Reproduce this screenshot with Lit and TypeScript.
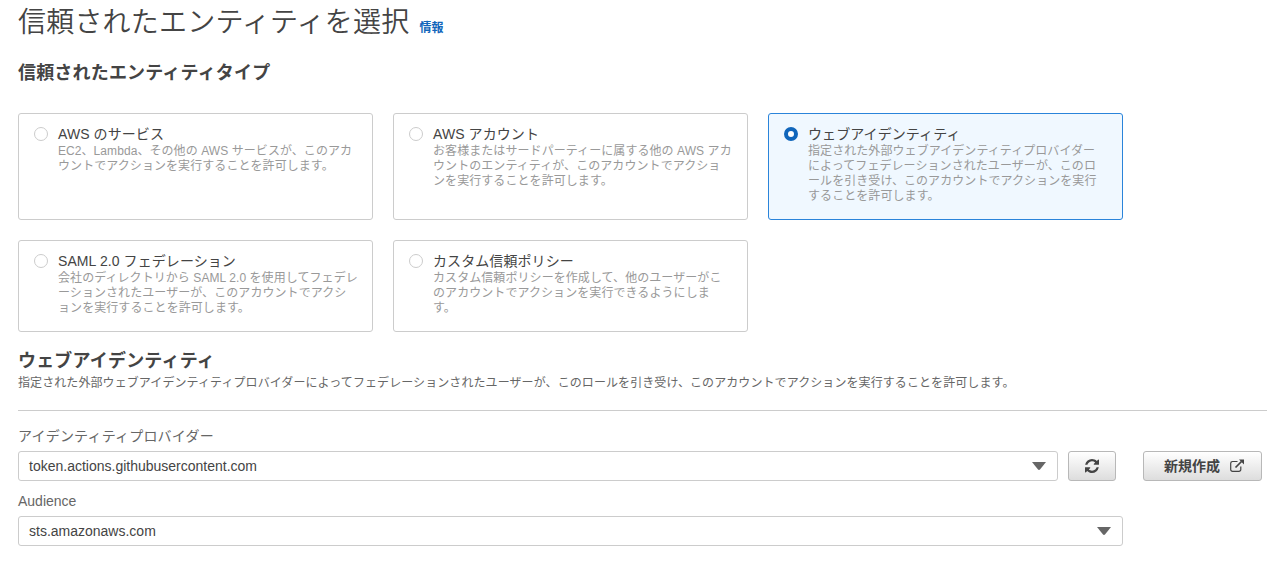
import { LitElement, html, css } from "lit";
import { customElement, property } from "lit/decorators.js";
import { classMap } from "lit/directives/class-map.js";

interface EntityType {
  label: string;
  lines: string[];
  selected?: boolean;
}

const ENTITY_TYPES: EntityType[] = [
  {
    label: "AWS のサービス",
    lines: ["EC2、Lambda、その他の AWS サービスが、このアカ", "ウントでアクションを実行することを許可します。"],
  },
  {
    label: "AWS アカウント",
    lines: [
      "お客様またはサードパーティーに属する他の AWS アカ",
      "ウントのエンティティが、このアカウントでアクショ",
      "ンを実行することを許可します。",
    ],
  },
  {
    label: "ウェブアイデンティティ",
    lines: [
      "指定された外部ウェブアイデンティティプロバイダー",
      "によってフェデレーションされたユーザーが、このロ",
      "ールを引き受け、このアカウントでアクションを実行",
      "することを許可します。",
    ],
    selected: true,
  },
  {
    label: "SAML 2.0 フェデレーション",
    lines: [
      "会社のディレクトリから SAML 2.0 を使用してフェデレ",
      "ーションされたユーザーが、このアカウントでアクシ",
      "ョンを実行することを許可します。",
    ],
  },
  {
    label: "カスタム信頼ポリシー",
    lines: ["カスタム信頼ポリシーを作成して、他のユーザーがこ", "のアカウントでアクションを実行できるようにしま", "す。"],
  },
];

@customElement("entity-card")
export class EntityCard extends LitElement {
  @property({ attribute: false }) item!: EntityType;

  static styles = css`
    :host {
      display: block;
    }
    .card {
      box-sizing: border-box;
      height: 100%;
      display: flex;
      gap: 10px;
      padding: 11px 14px 0 15px;
      border: 1px solid #ccc;
      border-radius: 3px;
      background: #fff;
    }
    .card.selected {
      border-color: #2a84da;
      background: #f0f8ff;
    }
    .radio {
      box-sizing: border-box;
      flex: none;
      width: 14px;
      height: 14px;
      margin-top: 2px;
      border: 1px solid #ccc;
      border-radius: 50%;
      background: #fff;
    }
    .selected .radio {
      border: 4px solid #1166bb;
    }
    .label {
      margin-bottom: 1px;
      font-size: 14px;
      line-height: 18px;
      letter-spacing: 0.08px;
      color: #444;
      white-space: nowrap;
    }
    .desc {
      font-size: 12px;
      line-height: 15px;
      letter-spacing: 0.07px;
      color: #999;
      white-space: nowrap;
    }
  `;

  render() {
    return html`<div class=${classMap({ card: true, selected: !!this.item.selected })}>
      <span class="radio"></span>
      <div>
        <div class="label">${this.item.label}</div>
        ${this.item.lines.map((line) => html`<div class="desc">${line}</div>`)}
      </div>
    </div>`;
  }
}

@customElement("select-box")
export class SelectBox extends LitElement {
  @property() value = "";

  static styles = css`
    :host {
      display: block;
    }
    .box {
      box-sizing: border-box;
      height: 30px;
      display: flex;
      align-items: center;
      justify-content: space-between;
      padding: 0 11px 0 10px;
      border: 1px solid #ccc;
      border-radius: 3px;
      background: #fff;
      color: #444;
      font-size: 14px;
      line-height: 20px;
    }
    .arrow {
      display: block;
    }
  `;

  render() {
    return html`<div class="box">
      <span>${this.value}</span>
      <svg class="arrow" width="14" height="8" viewBox="0 0 14 8"><path d="M0 0h14L8.2 7.3Q7 8.5 5.8 7.3z" fill="#666" /></svg>
    </div>`;
  }
}

@customElement("app-root")
export class AppRoot extends LitElement {
  static styles = css`
    :host {
      display: block;
      box-sizing: border-box;
      height: 561px;
      overflow: hidden;
      padding: 5px 0 0 18px;
      background: #fff;
      color: #444;
      font-family: "Liberation Sans", "Noto Sans CJK JP", sans-serif;
      white-space: nowrap;
    }
    h1,
    h2,
    p {
      margin: 0;
    }
    .title-row {
      display: flex;
      gap: 10px;
      height: 36px;
    }
    .title {
      font-size: 28px;
      line-height: 36px;
      letter-spacing: 0.2px;
      font-weight: 350;
      font-family: "Liberation Sans", "Noto Sans CJK JP DemiLight", "Noto Sans CJK JP", sans-serif;
    }
    .info {
      padding-top: 14px;
      font-size: 12px;
      line-height: 18px;
      font-weight: 700;
      color: #1166bb;
      text-decoration: none;
    }
    .heading {
      font-size: 18px;
      line-height: 24px;
      letter-spacing: 0.18px;
      font-weight: 700;
    }
    .types-heading {
      margin-top: 20px;
    }
    .cards {
      display: grid;
      grid-template-columns: repeat(3, 355px);
      grid-template-rows: 107px 92px;
      gap: 20px;
      margin-top: 28px;
    }
    .section-heading {
      margin-top: 17px;
    }
    .section-desc {
      margin-top: 1px;
      font-size: 12px;
      line-height: 18px;
      letter-spacing: 0.085px;
      color: #666;
    }
    .rule {
      margin-top: 18px;
      border-top: 1px solid #ccc;
    }
    .field-label {
      font-size: 14px;
      line-height: 20px;
      color: #666;
    }
    .provider-label {
      margin-top: 15px;
      letter-spacing: 0.2px;
    }
    .audience-label {
      margin-top: 10px;
    }
    .row {
      display: flex;
      margin-top: 5px;
    }
    .provider {
      width: 1040px;
    }
    .audience {
      width: 1105px;
    }
    .btn {
      box-sizing: border-box;
      height: 30px;
      display: flex;
      align-items: center;
      justify-content: center;
      gap: 10px;
      border: 1px solid #b8b8b8;
      border-radius: 3px;
      background: linear-gradient(#fff, #ddd);
      color: #444;
      font-size: 14px;
      line-height: 20px;
      font-weight: 700;
    }
    .refresh {
      width: 48px;
      margin-left: 10px;
    }
    .create {
      width: 119px;
      margin-left: 27px;
      padding-left: 3px;
    }
  `;

  render() {
    return html`
      <header class="title-row">
        <h1 class="title">信頼されたエンティティを選択</h1>
        <a class="info">情報</a>
      </header>
      <h2 class="heading types-heading">信頼されたエンティティタイプ</h2>
      <div class="cards">${ENTITY_TYPES.map((item) => html`<entity-card .item=${item}></entity-card>`)}</div>
      <h2 class="heading section-heading">ウェブアイデンティティ</h2>
      <p class="section-desc">
        指定された外部ウェブアイデンティティプロバイダーによってフェデレーションされたユーザーが、このロールを引き受け、このアカウントでアクションを実行することを許可します。
      </p>
      <div class="rule"></div>
      <div class="field-label provider-label">アイデンティティプロバイダー</div>
      <div class="row">
        <select-box class="provider" value="token.actions.githubusercontent.com"></select-box>
        <div class="btn refresh">
          <svg width="14" height="14" viewBox="0 0 1536 1536">
            <path
              fill="#444"
              d="M1511 928q0 5-1 7-64 268-268 434.500T764 1536q-146 0-282.500-55T238 1324l-129 129q-19 19-45 19t-45-19-19-45V960q0-26 19-45t45-19h448q26 0 45 19t19 45-19 45l-137 137q71 66 161 102t187 36q134 0 250-65t186-179q11-17 53-117 8-23 30-23h192q13 0 22.500 9.500t9.500 22.500zm25-800v448q0 26-19 45t-45 19h-448q-26 0-45-19t-19-45 19-45l138-138Q969 256 768 256q-134 0-250 65T332 500q-11 17-53 117-8 23-30 23H50q-13 0-22.500-9.500T18 608v-7q65-268 270-434.500T768 0q146 0 284 55.500T1297 212l130-129q19-19 45-19t45 19 19 45z"
            />
          </svg>
        </div>
        <div class="btn create">
          <span>新規作成</span>
          <svg width="14" height="14" viewBox="0 0 14 14" fill="none" stroke="#444">
            <path d="M7.500 2.500H2.500a1.800 1.800 0 0 0-1.800 1.800v6.200a1.800 1.800 0 0 0 1.800 1.800h6.500a1.800 1.800 0 0 0 1.800-1.800V7.500" stroke-width="1.200" />
            <path d="M5.500 8.500L11.500 2.500" stroke-width="1.700" />
            <path d="M9 0.500h5v5z" fill="#444" stroke="none" />
          </svg>
        </div>
      </div>
      <div class="field-label audience-label">Audience</div>
      <div class="row">
        <select-box class="audience" value="sts.amazonaws.com"></select-box>
      </div>
    `;
  }
}
